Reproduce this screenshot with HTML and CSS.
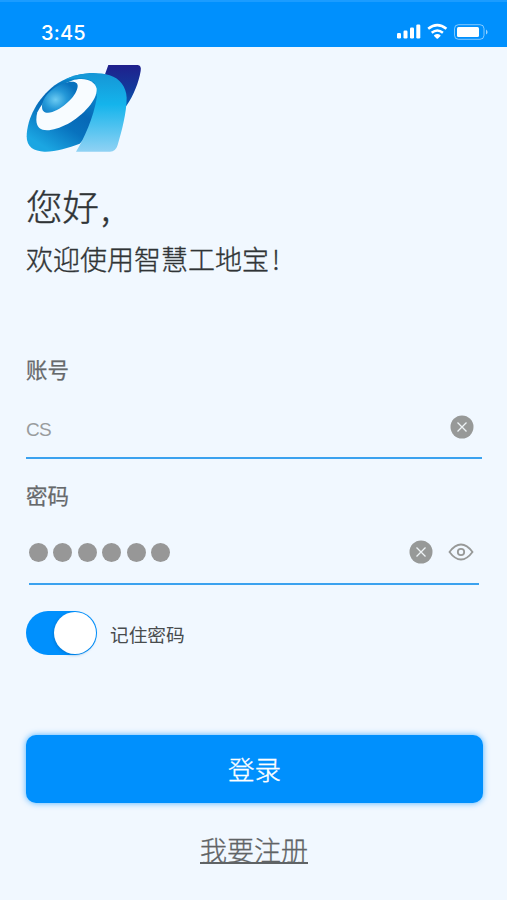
FILE: index.html
```html
<!DOCTYPE html>
<html lang="zh-CN">
<head>
<meta charset="utf-8">
<meta name="viewport" content="width=device-width, initial-scale=1">
<title>智慧工地宝</title>
<link rel="stylesheet" href="styles.css">
</head>
<body>
<header class="status">
  <span class="time">3:45</span>
  <svg class="indicators" width="94" height="20" viewBox="0 0 94 20">
    <g fill="#fff">
      <rect x="0" y="11" width="4" height="5.500" rx="1.200"/>
      <rect x="6.500" y="8.500" width="4" height="8" rx="1.200"/>
      <rect x="13" y="5.500" width="4" height="11" rx="1.200"/>
      <rect x="19.300" y="2.500" width="4" height="14" rx="1.200"/>
      <path d="M37.300 13q3-1.800 6 0q.6.600 0 1.200L41 16.400q-.7.700-1.400 0l-2.300-2.200q-.6-.6 0-1.200z"/>
      <rect x="60" y="5" width="22" height="10" rx="1.500"/>
      <path d="M89 7.500v5q1.600-1 1.600-2.500T89 7.500z" opacity=".6"/>
    </g>
    <g fill="none" stroke="#fff" stroke-width="2.600">
      <path d="M31.200 6.700q9.100-7.200 18.200 0"/>
      <path d="M34.700 10.700q5.600-4.400 11.200 0"/>
    </g>
    <rect x="57.500" y="2.700" width="29.500" height="14.600" rx="4" fill="none" stroke="#fff" opacity=".5"/>
  </svg>
</header>
<main class="page">
  <svg class="logo" viewBox="33 27 348 267">
    <defs>
      <linearGradient id="navy" x1="0" y1="0" x2="0" y2="1"><stop offset="0" stop-color="#20208c"/><stop offset=".6" stop-color="#123a9c"/><stop offset="1" stop-color="#0a5fb5"/></linearGradient>
      <linearGradient id="ring" x1=".75" y1=".15" x2=".25" y2=".95"><stop offset="0" stop-color="#0a86cc"/><stop offset=".35" stop-color="#0668b6"/><stop offset=".6" stop-color="#0872be"/><stop offset="1" stop-color="#1ba6e2"/></linearGradient>
      <linearGradient id="leg" x1="0" y1="0" x2="0" y2="1"><stop offset="0" stop-color="#1596d6"/><stop offset=".4" stop-color="#14b4ec"/><stop offset="1" stop-color="#90d2f4"/></linearGradient>
      <radialGradient id="pupil" cx=".38" cy=".58" r=".62"><stop offset="0" stop-color="#6ccbf2"/><stop offset=".5" stop-color="#2498d8"/><stop offset="1" stop-color="#0871bd"/></radialGradient>
    </defs>
    <path fill="url(#navy)" d="M280 30H368q12 2 9 18C371 83 357 119 334 153L270 58z"/>
    <path fill="url(#ring)" d="M88 290C57 289 35 277 35 244C36 190 68 130 119 91C158 62 211 48 262 59L255 200L194 266C160 279 120 291 88 290z"/>
    <path fill="url(#leg)" d="M150 74C188 54 242 48 284 61C315 70 334 97 335 128C335 172 321 225 308 270Q302 290 285 290H183C207 251 235 190 246 125L239 84C220 66 186 68 150 74z"/>
    <path fill="#f8fcff" d="M67 172C88 131 124 92 170 77C208 65 239 77 245 101C247 135 207 178 158 207C110 231 65 237 64 195Q64 182 67 172z"/>
    <path fill="url(#pupil)" d="M81 155C82 126 113 94 150 84C174 76 189 80 188 94C187 119 150 158 112 171C93 177 81 171 81 155z"/>
  </svg>
  <h1 class="hello">您好<span class="comma">,</span></h1>
  <p class="welcome">欢迎使用智慧工地宝<span class="bang">!</span></p>

  <section class="field">
    <label class="label">账号</label>
    <div class="entry">
      <span class="value">CS</span>
      <svg class="clear" viewBox="0 0 24 24"><circle cx="12" cy="12" r="11.500"/><path d="M7.500 7.500l9 9m0-9l-9 9"/></svg>
    </div>
  </section>
  <section class="field">
    <label class="label">密码</label>
    <div class="entry secret">
      <span class="dots"><i></i><i></i><i></i><i></i><i></i><i></i></span>
      <svg class="clear" viewBox="0 0 24 24"><circle cx="12" cy="12" r="11.500"/><path d="M7.500 7.500l9 9m0-9l-9 9"/></svg>
      <svg class="eye" viewBox="0 0 26 20"><path d="M1.500 10Q7 2.500 13 2.500T24.500 10Q19 17.500 13 17.500T1.500 10z"/><circle cx="13" cy="10" r="3.200"/></svg>
    </div>
  </section>

  <div class="remember">
    <span class="switch"><span class="knob"></span></span>
    <span>记住密码</span>
  </div>
  <button class="login">登录</button>
  <a class="register">我要注册</a>
</main>
</body>
</html>
```
FILE: styles.css
```css
* { box-sizing: border-box; }
body {
  margin: 0;
  height: 900px;
  overflow: hidden;
  background: #f1f8ff;
  color: #303436;
  font-family: "Noto Sans CJK SC", sans-serif;
}
.status {
  height: 47px;
  padding: 20px 16px 0 41px;
  background: #0090fd;
  border-top: 2px solid #1b9cff;
  display: flex;
  justify-content: space-between;
  align-items: flex-start;
}
.time {
  color: #fff;
  font: 500 20px/20px Inter, sans-serif;
  letter-spacing: .2px;
  margin-top: 1px;
}
.indicators { display: block; }
.page {
  padding: 17px 25px 0 26px;
  display: flex;
  flex-direction: column;
}
.logo { width: 116px; height: 89px; display: block; }
.hello {
  margin: 26px 0 0;
  font-size: 36.500px;
  line-height: 54px;
  font-weight: 300;
  -webkit-text-stroke: .4px;
}
.comma { margin-left: 2px; }
.welcome {
  margin: 5px 0 73px;
  font-size: 27px;
  line-height: 42px;
  font-weight: 300;
  -webkit-text-stroke: .35px;
}
.bang { margin-left: 3px; }
.field { display: flex; flex-direction: column; height: 125.500px; }
.label {
  height: 56px;
  font-size: 21.500px;
  line-height: 32px;
  font-weight: 400;
  -webkit-text-stroke: .25px;
  color: #66696b;
}
.entry {
  height: 50px;
  padding-right: 8px;
  border-bottom: 2px solid #3ba2ef;
  display: flex;
  align-items: center;
  padding-bottom: 13px;
}
.value {
  flex: 1;
  color: #999c9e;
  font: 19px/24px "Liberation Sans", sans-serif;
  padding-top: 6px;
  letter-spacing: -.6px;
}
.secret { margin: 0 3px; padding-right: 5px; }
.dots { flex: 1; display: flex; gap: 5.400px; }
.dots i { width: 19px; height: 19px; border-radius: 50%; background: #979797; }
.clear { width: 24px; height: 24px; fill: #979998; stroke: #eef3f6; stroke-width: 1.300; }
.clear circle { stroke: none; }
.eye { width: 26px; height: 20px; margin-left: 15px; fill: none; stroke: #979998; stroke-width: 1.800; }
.remember {
  margin-top: 7px;
  height: 44px;
  display: flex;
  align-items: center;
  gap: 13px;
  font-size: 18.700px;
  color: #484c4e;
}
.switch {
  width: 71px;
  height: 44px;
  border-radius: 22px;
  padding: 1px;
  background: #0090fd;
  display: flex;
  justify-content: flex-end;
}
.knob { width: 42px; height: 42px; border-radius: 50%; background: #fff; box-shadow: -1px 1px 3px #0067bb80; }
.login {
  margin: 80px -1px 0 0;
  height: 68px;
  border: 0;
  border-radius: 10px;
  background: #0090fd;
  box-shadow: 0 0 6px #0090fdb0;
  color: #fff;
  font: 300 26.500px/68px "Noto Sans CJK SC", sans-serif;
  -webkit-text-stroke: .35px;
  padding: 0;
}
.register {
  align-self: center;
  margin-top: 27px;
  font-size: 27px;
  line-height: 40px;
  font-weight: 300;
  -webkit-text-stroke: .3px;
  color: #5f6365;
  text-decoration: underline;
  text-decoration-thickness: 2px;
  text-underline-offset: 1px;
}
```
